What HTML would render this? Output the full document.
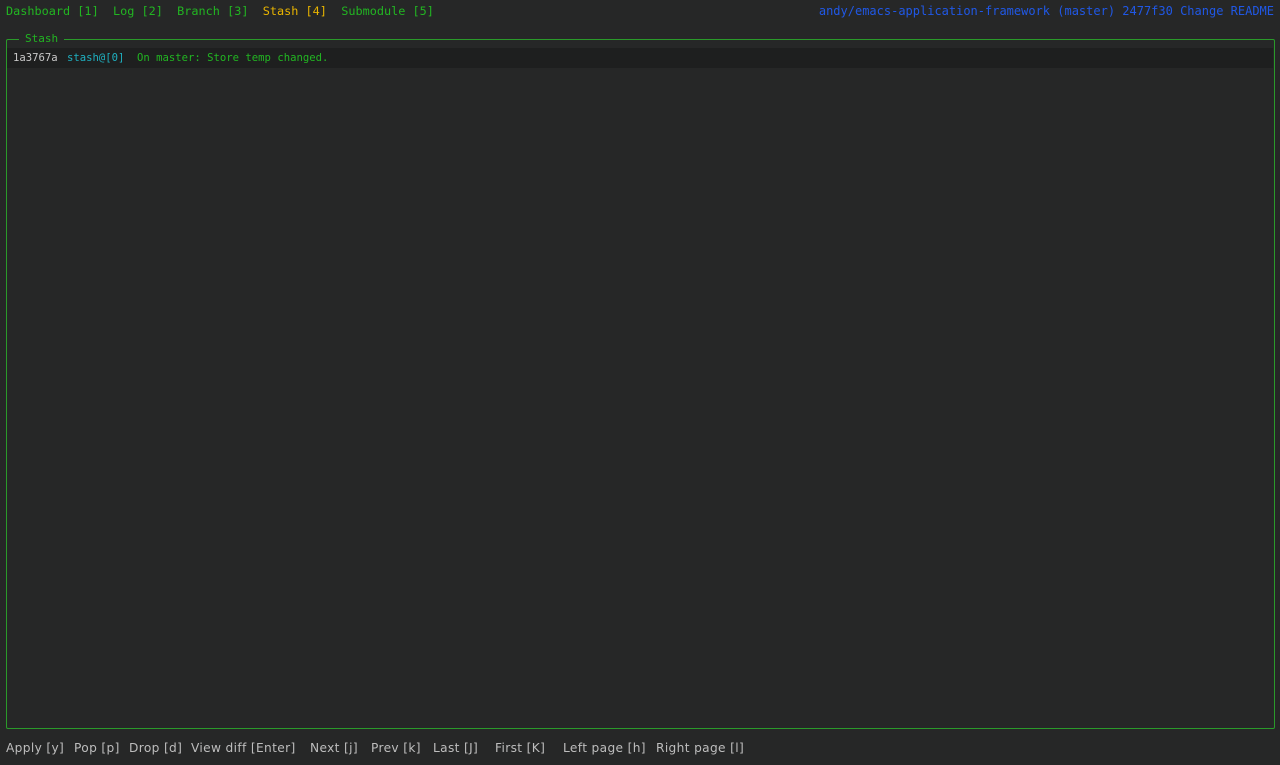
<!DOCTYPE html>
<html><head><meta charset="utf-8"><style>
body{margin:0;width:1280px;height:765px;background:#262727;font-family:"DejaVu Sans Mono","Liberation Mono",monospace;position:relative;overflow:hidden}
.t{position:absolute;top:3px;font-size:11.85px;line-height:16px;white-space:pre}
.g{color:#22b522}.y{color:#e8b400}.b{color:#2058e6}
.box{position:absolute;left:6px;top:39px;width:1267px;height:688px;border:1px solid #2a9a2a;border-radius:2px}
.lbl{position:absolute;left:19px;top:32px;background:#262727;padding:0 6px;font-size:11px;line-height:14px;color:#22b522}
.row{position:absolute;left:7px;top:48px;width:1266px;height:20px;background:#1e1f1f;font-size:10.6px;line-height:20px;white-space:pre}
.f{position:absolute;top:740px;font-family:"DejaVu Sans","Liberation Sans",sans-serif;font-size:12.2px;letter-spacing:0.35px;line-height:16px;color:#bdbdbd;white-space:pre}
</style></head><body>
<div class="t" style="left:6px"><span class="g">Dashboard [1]</span>  <span class="g">Log [2]</span>  <span class="g">Branch [3]</span>  <span class="y">Stash [4]</span>  <span class="g">Submodule [5]</span></div>
<div class="t b" style="right:6px;font-size:12px">andy/emacs-application-framework (master) 2477f30 Change README</div>
<div class="box"></div>
<div class="lbl">Stash</div>
<div class="row"><span style="position:absolute;left:6px;color:#c8c8c8">1a3767a</span><span style="position:absolute;left:60px;color:#1fb0c0">stash@[0]</span><span style="position:absolute;left:130px;color:#22b522">On master: Store temp changed.</span></div>
<div class="f" style="left:6px">Apply [y]</div>
<div class="f" style="left:74px">Pop [p]</div>
<div class="f" style="left:129px">Drop [d]</div>
<div class="f" style="left:191px">View diff [Enter]</div>
<div class="f" style="left:310px">Next [j]</div>
<div class="f" style="left:371px">Prev [k]</div>
<div class="f" style="left:433px">Last [J]</div>
<div class="f" style="left:495px">First [K]</div>
<div class="f" style="left:563px">Left page [h]</div>
<div class="f" style="left:656px">Right page [l]</div>
</body></html>
